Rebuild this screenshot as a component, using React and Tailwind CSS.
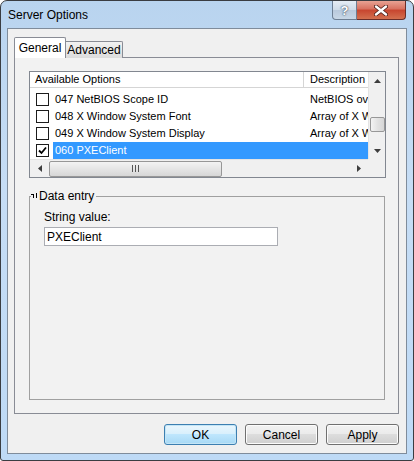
import React from 'react';

const options = [
  { label: '047 NetBIOS Scope ID', desc: 'NetBIOS over TCP/IP scope', checked: false },
  { label: '048 X Window System Font', desc: 'Array of X Windows font servers', checked: false },
  { label: '049 X Window System Display', desc: 'Array of X Windows display managers', checked: false },
  { label: '060 PXEClient', desc: '', checked: true, selected: true },
];

const font = { fontFamily: '"Liberation Sans", Arial, sans-serif' };

function CheckBox({ checked }) {
  return (
    <span className="w-[13px] h-[13px] border border-[#1c1c1c] bg-white flex items-center justify-center shrink-0">
      {checked && (
        <svg width="9" height="9" viewBox="0 0 9 9">
          <path d="M1 4.5 L3.5 7 L8 1.5" fill="none" stroke="#000" strokeWidth="1.8" />
        </svg>
      )}
    </span>
  );
}

function Arrow({ dir }) {
  const paths = {
    up: 'M0 4 L3.5 0 L7 4 Z',
    down: 'M0 0 L7 0 L3.5 4 Z',
    left: 'M4 0 L4 7 L0 3.5 Z',
    right: 'M0 0 L4 3.5 L0 7 Z',
  };
  const vertical = dir === 'up' || dir === 'down';
  return (
    <svg width={vertical ? 7 : 4} height={vertical ? 4 : 7} viewBox={vertical ? '0 0 7 4' : '0 0 4 7'}>
      <path d={paths[dir]} fill="#3d3d3d" />
    </svg>
  );
}

function DialogButton({ children, focused }) {
  return (
    <button
      className={
        'w-[73px] h-[21px] rounded-[3px] text-[12px] text-black ' +
        (focused
          ? 'border border-[#3c7fb1] bg-[linear-gradient(#eaf6fd_0%,#d9f0fc_45%,#bee6fd_50%,#a7d9f5_100%)] shadow-[inset_0_0_0_1px_#c4e5f6]'
          : 'border border-[#707070] bg-[linear-gradient(#f2f2f2_0%,#ebebeb_45%,#dddddd_50%,#cfcfcf_100%)] shadow-[inset_0_0_0_1px_#fcfcfc]')
      }
      style={font}
    >
      {children}
    </button>
  );
}

export default function App() {
  return (
    <div
      className="w-[414px] h-[461px] flex flex-col border border-[#3a3d42] rounded-t-[7px] rounded-b-[3px] overflow-hidden bg-[linear-gradient(180deg,#b9d4ef_0%,#c6ddf5_40%,#bedaf6_100%)]"
      style={font}
    >
      {/* title bar */}
      <div className="h-[27px] flex items-start justify-between shrink-0">
        <span className="pl-[7px] pt-[8px] text-[12px] text-black leading-none">Server Options</span>
        <div className="flex mr-[7px]">
          <div className="w-[25px] h-[19px] border border-[#6d7e93] border-t-0 rounded-bl-[4px] bg-[linear-gradient(#e5ecf4_0%,#cfdbe8_50%,#b9c9dc_51%,#c8d7e7_100%)] flex items-center justify-center">
            <span className="text-[13px] font-bold text-white leading-none [text-shadow:0_0_2px_#3a4a5e,0_0_1px_#3a4a5e]">?</span>
          </div>
          <div className="w-[49px] h-[19px] border border-[#6a2d28] border-t-0 border-l-0 rounded-br-[4px] bg-[linear-gradient(#e8a293_0%,#d7705f_45%,#c7452f_50%,#d3704f_100%)] flex items-center justify-center">
            <svg width="14" height="11" viewBox="0 0 14 11">
              <path d="M2 1.5 L12 9.5 M12 1.5 L2 9.5" stroke="#4a1c16" strokeWidth="4" strokeLinecap="round" />
              <path d="M2 1.5 L12 9.5 M12 1.5 L2 9.5" stroke="#ffffff" strokeWidth="2.4" strokeLinecap="round" />
            </svg>
          </div>
        </div>
      </div>

      {/* client area */}
      <div className="mx-[6px] h-[426px] border border-[#7f8c9b] bg-[#f0f0f0] flex flex-col shrink-0">
        <div className="pt-[8px] pl-[6px]">
          {/* tabs */}
          <div className="flex items-end h-[21px]">
            <div className="relative z-10 w-[52px] h-[21px] border border-b-0 border-[#898c95] bg-white flex items-center justify-center text-[12px] text-black rounded-t-[2px]">
              General
            </div>
            <div className="w-[57px] h-[17px] border border-l-0 border-b-0 border-[#898c95] bg-[linear-gradient(#f2f2f2,#dcdcdc)] flex items-center justify-center text-[12px] text-black rounded-tr-[2px]">
              Advanced
            </div>
          </div>

          {/* tab page */}
          <div className="-mt-px w-[385px] h-[357px] border border-[#898c95] bg-[#f2f2f2] pl-[14px] pt-[13px]">
            {/* list view */}
            <div className="w-[357px] h-[107px] border border-[#828790] bg-white flex flex-col text-[11px] text-black">
              <div className="flex h-[87px]">
                <div className="w-[338px] flex flex-col overflow-hidden">
                  <div className="h-[16px] flex border-b border-[#d5d5d5] bg-white shrink-0">
                    <div className="w-[274px] border-r border-[#d5d5d5] pl-[5px] flex items-center">Available Options</div>
                    <div className="w-[64px] pl-[6px] flex items-center">Description</div>
                  </div>
                  <div className="pt-[3px] flex flex-col">
                    {options.map((o) => (
                      <div key={o.label} className="h-[17px] flex items-center">
                        <div className="w-[274px] flex items-center h-full">
                          <span className="pl-[6px] pr-[4px] flex items-center">
                            <CheckBox checked={o.checked} />
                          </span>
                          <span
                            className={
                              'h-full flex-1 flex items-center pl-[2px] whitespace-nowrap ' +
                              (o.selected ? 'bg-[#3399ff] text-white' : '')
                            }
                          >
                            {o.label}
                          </span>
                        </div>
                        <div
                          className={
                            'w-[64px] h-full flex items-center pl-[6px] whitespace-nowrap overflow-hidden ' +
                            (o.selected ? 'bg-[#3399ff]' : '')
                          }
                        >
                          {o.desc}
                        </div>
                      </div>
                    ))}
                  </div>
                </div>
                {/* vertical scrollbar */}
                <div className="w-[17px] bg-[#f0f0f0] border-l border-[#e4e4e4] flex flex-col items-center">
                  <div className="h-[17px] flex items-center justify-center">
                    <Arrow dir="up" />
                  </div>
                  <div className="h-[28px]" />
                  <div className="w-[15px] h-[15px] rounded-[2px] border border-[#979797] bg-[linear-gradient(90deg,#f3f3f3,#e2e2e2_50%,#d6d6d6)]" />
                  <div className="flex-1" />
                  <div className="h-[17px] flex items-center justify-center">
                    <Arrow dir="down" />
                  </div>
                </div>
              </div>
              {/* horizontal scrollbar */}
              <div className="flex h-[18px]">
                <div className="w-[338px] bg-[#f0f0f0] border-t border-[#e4e4e4] flex items-center">
                  <div className="w-[19px] flex justify-center">
                    <Arrow dir="left" />
                  </div>
                  <div className="w-[173px] h-[16px] rounded-[2px] border border-[#979797] bg-[linear-gradient(#f3f3f3,#e5e5e5_50%,#d6d6d6)] flex items-center justify-center">
                    <svg width="7" height="7" viewBox="0 0 7 7">
                      <path d="M0.5 0v7 M3.5 0v7 M6.5 0v7" stroke="#555" strokeWidth="1" />
                    </svg>
                  </div>
                  <div className="flex-1" />
                  <div className="w-[19px] flex justify-center">
                    <Arrow dir="right" />
                  </div>
                </div>
                <div className="flex-1 bg-[#f0f0f0]" />
              </div>
            </div>

            {/* data entry group */}
            <fieldset className="mt-[9px] w-[356px] h-[213px] border border-[#a0a0a0] pl-[14px] pr-[6px]">
              <legend className="ml-[-13px] pr-[2px] flex items-center text-[12px] text-black">
                <svg width="7" height="6" viewBox="0 0 7 6" className="mr-[1px]">
                  <path d="M0 1.5h3 M2.5 1v4 M5.5 0v5" stroke="#000" strokeWidth="1" />
                </svg>
                Data entry
              </legend>
              <div className="mt-[5px] text-[12px] leading-[15px] text-black">String value:</div>
              <div className="mt-[2px] w-[234px] h-[19px] border border-[#abadb3] bg-white flex items-center pl-[2px] text-[12px] text-black">
                PXEClient
              </div>
            </fieldset>
          </div>
        </div>

        {/* dialog buttons */}
        <div className="mt-[10px] pr-[7px] flex justify-end gap-[8px]">
          <DialogButton focused>OK</DialogButton>
          <DialogButton>Cancel</DialogButton>
          <DialogButton>Apply</DialogButton>
        </div>
      </div>
    </div>
  );
}
